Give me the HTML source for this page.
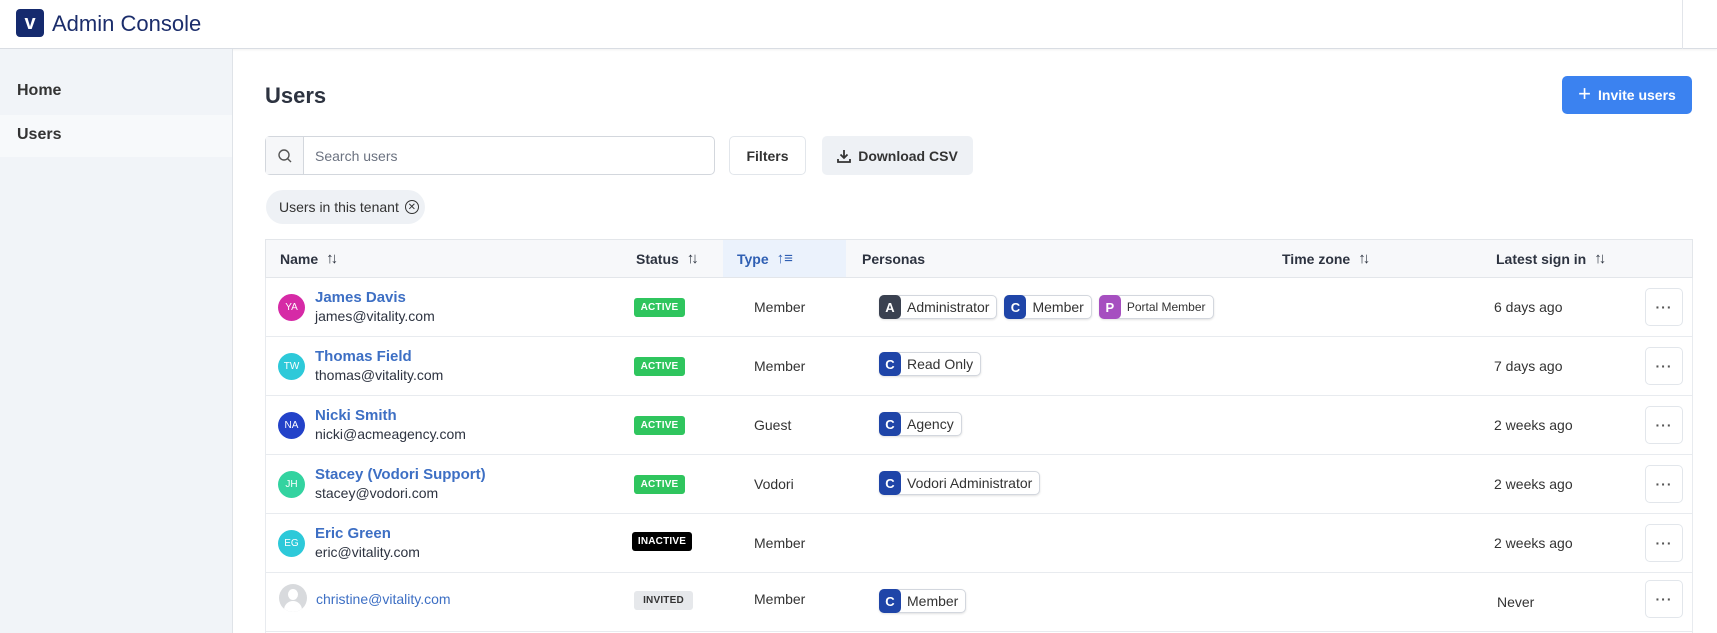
<!DOCTYPE html>
<html><head><meta charset="utf-8"><style>
*{box-sizing:border-box;margin:0;padding:0}
body{width:1717px;height:633px;overflow:hidden;background:#fff;font-family:"Liberation Sans",sans-serif;color:#2d3340;position:relative}
.a{position:absolute}
.hdr{left:0;top:0;width:1717px;height:49px;border-bottom:1px solid #d9dde3;background:#fff;box-shadow:0 1px 2px rgba(0,0,0,.06)}
.side{left:0;top:49px;width:233px;height:584px;background:#f1f4f8;border-right:1px solid #dfe3e8}
.btn{border:1px solid #e2e6eb;border-radius:5px;font-size:14px;display:flex;align-items:center;justify-content:center;color:#333;font-weight:bold}
.th{top:239px;height:39px;font-size:14px;font-weight:bold;color:#2d3340;display:flex;align-items:center}
.row{left:265px;width:1428px;height:59px;border-bottom:1px solid #e8ebef}
.av{width:27px;height:27px;border-radius:50%;color:#fff;font-size:10px;display:flex;align-items:center;justify-content:center}
.nm{font-size:15px;color:#3d6fc4;font-weight:bold}
.em{font-size:14px;color:#2d3340;margin-top:2px}
.bd{height:19px;border-radius:3px;font-size:10px;font-weight:bold;color:#fff;display:flex;align-items:center;justify-content:center;letter-spacing:.2px}
.ty{font-size:14px;color:#333}
.pc{display:inline-flex;align-items:center;height:24px;border:1px solid #d3d7de;border-radius:5px;box-shadow:0 1px 2px rgba(0,0,0,.12);font-size:14px;color:#333;padding-right:7px;margin-right:7px;vertical-align:middle;background:#fff}
.pc i{font-style:normal;width:22px;height:24px;margin:-1px 6px -1px -1px;border-radius:5px;color:#fff;font-weight:bold;font-size:13px;display:flex;align-items:center;justify-content:center}
.ls{font-size:14px;color:#333}
.mo{width:38px;height:38px;border:1px solid #e2e6eb;border-radius:5px;display:flex;align-items:center;justify-content:center;font-size:14px;color:#555;letter-spacing:1px;font-weight:bold}
.sort{font-weight:normal;font-size:15px;margin-left:8px;letter-spacing:-3px}
</style></head><body>
<div class="a hdr">
 <div class="a" style="left:16px;top:9px;width:28px;height:28px;background:#152a6e;border-radius:4px;color:#fff;font-weight:bold;font-size:20px;display:flex;align-items:center;justify-content:center">v</div>
 <div class="a" style="left:52px;top:11px;font-size:22px;color:#1b2d6b">Admin Console</div>
 <div class="a" style="left:1682px;top:0;width:1px;height:49px;background:#e2e5ea"></div>
</div>
<div class="a side">
 <div class="a" style="left:17px;top:33px;font-size:16px;font-weight:bold;color:#333">Home</div>
 <div class="a" style="left:0;top:66px;width:232px;height:42px;background:#f7f9fb"></div>
 <div class="a" style="left:17px;top:77px;font-size:16px;font-weight:bold;color:#333">Users</div>
</div>
<div class="a" style="left:265px;top:83px;font-size:22px;font-weight:bold;color:#2d3340">Users</div>
<div class="a" style="left:1562px;top:76px;width:130px;height:38px;background:#3b82f0;border-radius:5px;color:#fff;font-size:14px;font-weight:bold;display:flex;align-items:center;justify-content:center"><span style="font-size:22px;font-weight:normal;margin-right:7px;margin-top:-3px">+</span>Invite users</div>
<div class="a" style="left:265px;top:136px;width:450px;height:39px;border:1px solid #d3d7dd;border-radius:5px;display:flex">
 <div style="width:38px;border-right:1px solid #d3d7dd;background:#f6f7f9;display:flex;align-items:center;justify-content:center"><svg width="16" height="16" viewBox="0 0 16 16" fill="none" stroke="#555" stroke-width="1.4"><circle cx="7" cy="7" r="5"/><path d="M10.7 10.7L14 14"/></svg></div>
 <div style="padding-left:11px;display:flex;align-items:center;font-size:14px;color:#6b7280">Search users</div>
</div>
<div class="a btn" style="left:729px;top:136px;width:77px;height:39px">Filters</div>
<div class="a btn" style="left:822px;top:136px;width:151px;height:39px;background:#eef1f5;border-color:#eef1f5"><svg width="14" height="14" viewBox="0 0 14 14" fill="none" stroke="#333" stroke-width="1.8" style="margin-right:7px"><path d="M7 1v8M3.5 5.5L7 9l3.5-3.5M1 10v3h12v-3"/></svg>Download CSV</div>
<div class="a" style="left:266px;top:190px;width:159px;height:34px;background:#eef1f5;border-radius:17px;font-size:14px;color:#333;display:flex;align-items:center;padding-left:13px">Users in this tenant <span style="margin-left:6px;width:14px;height:14px;border:1.3px solid #333;border-radius:50%;font-size:10px;display:flex;align-items:center;justify-content:center">✕</span></div>

<div class="a" style="left:265px;top:239px;width:1428px;height:39px;background:#f7f8fa;border:1px solid #e3e6ea"></div>
<div class="a" style="left:723px;top:240px;width:123px;height:37px;background:#ebf2fc"></div>
<div class="a th" style="left:280px">Name<span class="sort">↑↓</span></div>
<div class="a th" style="left:636px">Status<span class="sort">↑↓</span></div>
<div class="a th" style="left:737px;color:#2f5fb3">Type<span class="sort" style="letter-spacing:0">↑≡</span></div>
<div class="a th" style="left:862px">Personas</div>
<div class="a th" style="left:1282px">Time zone<span class="sort">↑↓</span></div>
<div class="a th" style="left:1496px">Latest sign in<span class="sort">↑↓</span></div>
<div class="a" style="left:265px;top:278px;width:1px;height:355px;background:#e8ebef"></div>
<div class="a" style="left:1692px;top:278px;width:1px;height:355px;background:#e8ebef"></div>

<!-- rows -->
<div class="a row" style="top:278px"></div>
<div class="a av" style="left:278px;top:294px;background:#d62aa6">YA</div>
<div class="a" style="left:315px;top:289px"><div class="nm">James Davis</div><div class="em">james@vitality.com</div></div>
<div class="a bd" style="left:634px;top:298px;width:51px;background:#2fc55e">ACTIVE</div>
<div class="a ty" style="left:754px;top:299px">Member</div>
<div class="a" style="left:879px;top:295px;white-space:nowrap"><span class="pc"><i style="background:#3a4150">A</i>Administrator</span><span class="pc"><i style="background:#1f45a8">C</i>Member</span><span class="pc" style="font-size:12px"><i style="background:#a64fc0">P</i>Portal Member</span></div>
<div class="a ls" style="left:1494px;top:299px">6 days ago</div>
<div class="a mo" style="left:1645px;top:288px">···</div>

<div class="a row" style="top:337px"></div>
<div class="a av" style="left:278px;top:353px;background:#2dc9d9">TW</div>
<div class="a" style="left:315px;top:348px"><div class="nm">Thomas Field</div><div class="em">thomas@vitality.com</div></div>
<div class="a bd" style="left:634px;top:357px;width:51px;background:#2fc55e">ACTIVE</div>
<div class="a ty" style="left:754px;top:358px">Member</div>
<div class="a" style="left:879px;top:352px"><span class="pc"><i style="background:#1f45a8">C</i>Read Only</span></div>
<div class="a ls" style="left:1494px;top:358px">7 days ago</div>
<div class="a mo" style="left:1645px;top:347px">···</div>

<div class="a row" style="top:396px"></div>
<div class="a av" style="left:278px;top:412px;background:#2342c9">NA</div>
<div class="a" style="left:315px;top:407px"><div class="nm">Nicki Smith</div><div class="em">nicki@acmeagency.com</div></div>
<div class="a bd" style="left:634px;top:416px;width:51px;background:#2fc55e">ACTIVE</div>
<div class="a ty" style="left:754px;top:417px">Guest</div>
<div class="a" style="left:879px;top:412px"><span class="pc"><i style="background:#1f45a8">C</i>Agency</span></div>
<div class="a ls" style="left:1494px;top:417px">2 weeks ago</div>
<div class="a mo" style="left:1645px;top:406px">···</div>

<div class="a row" style="top:455px"></div>
<div class="a av" style="left:278px;top:471px;background:#33d3a0">JH</div>
<div class="a" style="left:315px;top:466px"><div class="nm">Stacey (Vodori Support)</div><div class="em">stacey@vodori.com</div></div>
<div class="a bd" style="left:634px;top:475px;width:51px;background:#2fc55e">ACTIVE</div>
<div class="a ty" style="left:754px;top:476px">Vodori</div>
<div class="a" style="left:879px;top:471px"><span class="pc"><i style="background:#1f45a8">C</i>Vodori Administrator</span></div>
<div class="a ls" style="left:1494px;top:476px">2 weeks ago</div>
<div class="a mo" style="left:1645px;top:465px">···</div>

<div class="a row" style="top:514px"></div>
<div class="a av" style="left:278px;top:530px;background:#2dc9d9">EG</div>
<div class="a" style="left:315px;top:525px"><div class="nm">Eric Green</div><div class="em">eric@vitality.com</div></div>
<div class="a bd" style="left:632px;top:532px;width:60px;background:#000">INACTIVE</div>
<div class="a ty" style="left:754px;top:535px">Member</div>
<div class="a ls" style="left:1494px;top:535px">2 weeks ago</div>
<div class="a mo" style="left:1645px;top:524px">···</div>

<div class="a row" style="top:573px"></div>
<div class="a" style="left:279px;top:584px;width:28px;height:28px;border-radius:50%;background:#d8dadd;overflow:hidden"><div style="position:absolute;left:9px;top:5px;width:10px;height:11px;border-radius:50%;background:#fff"></div><div style="position:absolute;left:5px;top:17px;width:18px;height:14px;border-radius:9px 9px 0 0;background:#fff"></div></div>
<div class="a" style="left:316px;top:591px;font-size:14px;color:#3d6fc4">christine@vitality.com</div>
<div class="a bd" style="left:634px;top:591px;width:59px;background:#e6e8eb;color:#333">INVITED</div>
<div class="a ty" style="left:754px;top:591px">Member</div>
<div class="a" style="left:879px;top:589px"><span class="pc"><i style="background:#1f45a8">C</i>Member</span></div>
<div class="a ls" style="left:1497px;top:594px">Never</div>
<div class="a mo" style="left:1645px;top:580px">···</div>
</body></html>
